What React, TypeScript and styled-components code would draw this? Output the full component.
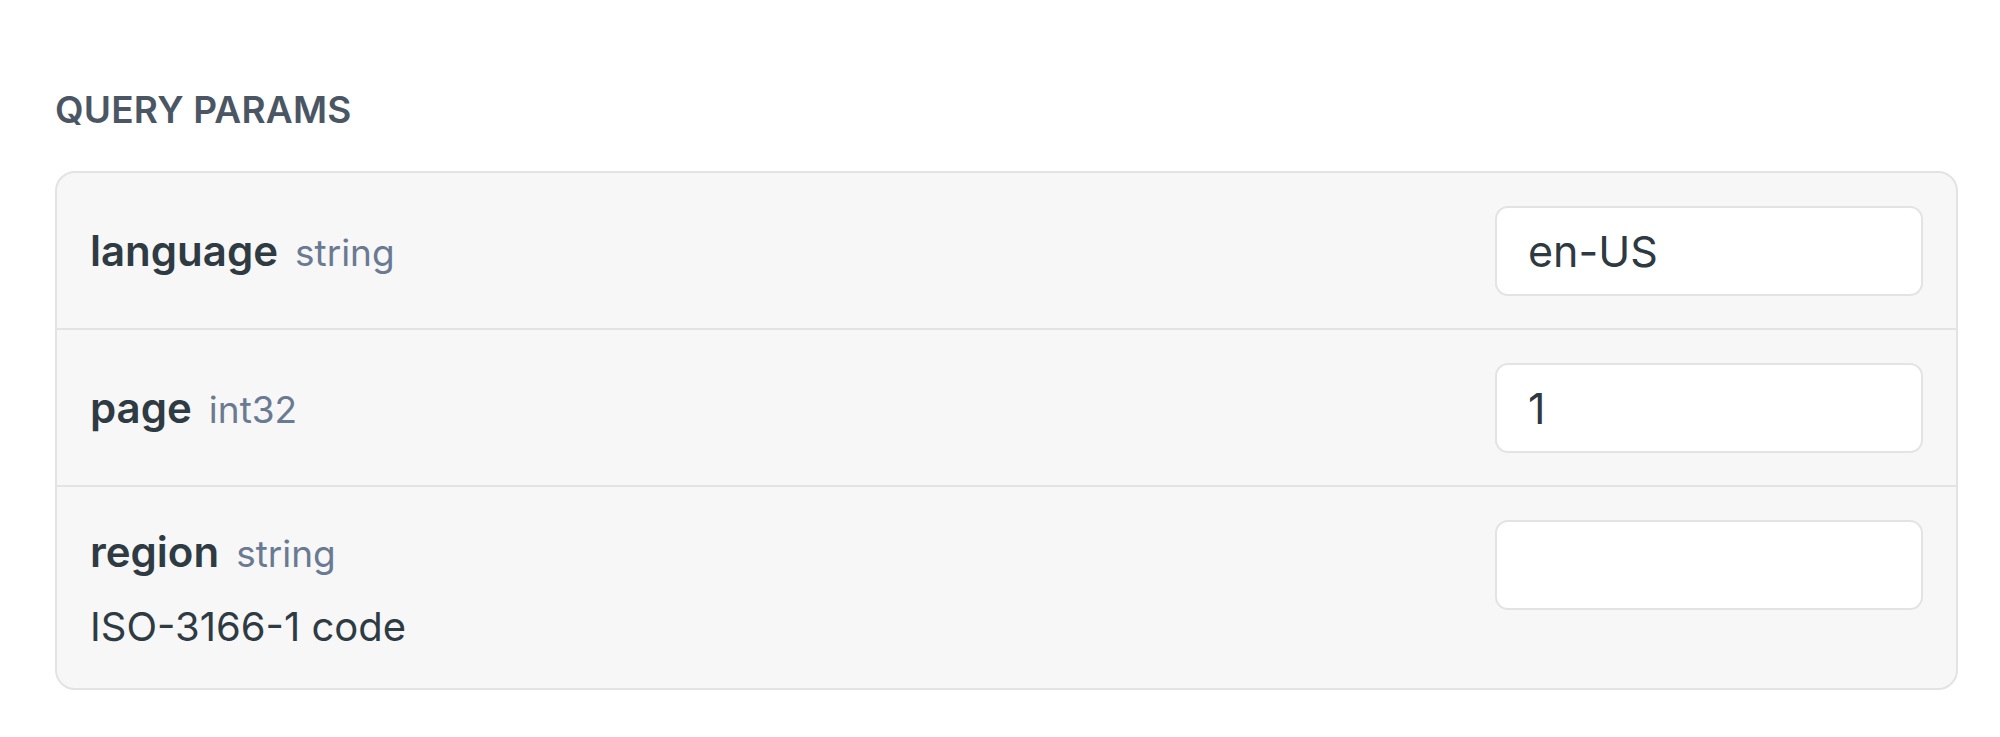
import React from "react";
import styled, { createGlobalStyle } from "styled-components";

const GlobalStyle = createGlobalStyle`
  html, body {
    margin: 0;
    padding: 0;
    background: #ffffff;
  }
  body {
    font-family: Inter, "Noto Sans", "Liberation Sans", sans-serif;
    -webkit-font-smoothing: antialiased;
  }
  * { box-sizing: border-box; }
`;

const Page = styled.div`
  padding: 88px 42px 0 55px;
`;

const SectionTitle = styled.h2`
  margin: 0 0 39px 0;
  font-size: 37px;
  line-height: 44px;
  font-weight: 600;
  letter-spacing: 0.2px;
  text-transform: uppercase;
  color: #4b5664;
`;

const Card = styled.div`
  border: 2px solid #e3e3e3;
  border-radius: 20px;
  background: #f7f7f7;
  overflow: hidden;
`;

const Row = styled.div`
  display: flex;
  align-items: flex-start;
  justify-content: space-between;
  padding: 33px 33px 32px 33px;
  & + & {
    border-top: 2px solid #e3e3e3;
  }
`;

const Info = styled.div`
  display: flex;
  flex-direction: column;
  justify-content: center;
  min-height: 90px;
`;

const NameLine = styled.div`
  display: flex;
  align-items: baseline;
  gap: 17px;
  line-height: 63px;
`;

const Name = styled.span`
  font-size: 42px;
  font-weight: 600;
  color: #2f3b43;
`;

const TypeTag = styled.span`
  font-size: 37px;
  font-weight: 400;
  color: #6a7a92;
`;

const Description = styled.div`
  margin-top: 12px;
  font-size: 40px;
  line-height: 59px;
  color: #2f3b43;
`;

const Field = styled.input`
  flex: none;
  width: 428px;
  height: 90px;
  border: 2px solid #e3e3e3;
  border-radius: 13px;
  background: #ffffff;
  padding: 0 20px 0 31px;
  font-family: Inter, "Noto Sans", "Liberation Sans", sans-serif;
  font-size: 43px;
  color: #2e3a41;
  outline: none;
`;

type Param = {
  name: string;
  type: string;
  value: string;
  description?: string;
};

const params: Param[] = [
  { name: "language", type: "string", value: "en-US" },
  { name: "page", type: "int32", value: "1" },
  { name: "region", type: "string", value: "", description: "ISO-3166-1 code" },
];

export default function App() {
  return (
    <>
      <GlobalStyle />
      <Page>
        <SectionTitle>Query Params</SectionTitle>
        <Card>
          {params.map((p) => (
            <Row key={p.name}>
              <Info>
                <NameLine>
                  <Name>{p.name}</Name>
                  <TypeTag>{p.type}</TypeTag>
                </NameLine>
                {p.description && <Description>{p.description}</Description>}
              </Info>
              <Field defaultValue={p.value} />
            </Row>
          ))}
        </Card>
      </Page>
    </>
  );
}
